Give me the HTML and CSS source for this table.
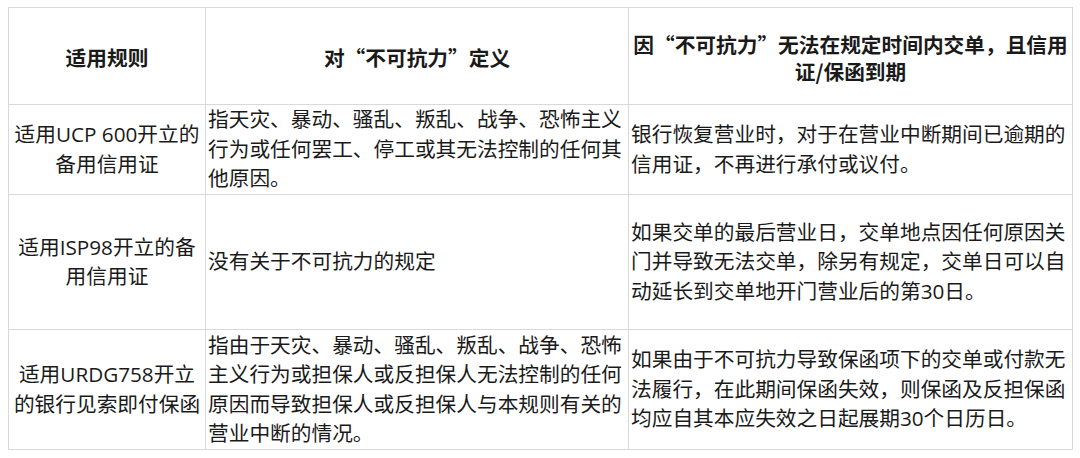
FILE: index.html
```html
<!DOCTYPE html>
<html lang="zh-CN">
<head>
<meta charset="utf-8">
<title>不可抗力规则对比</title>
<link rel="stylesheet" href="styles.css">
</head>
<body>
<table class="rules">
  <colgroup>
    <col class="c1">
    <col class="c2">
    <col class="c3">
  </colgroup>
  <thead>
    <tr class="r-head">
      <th>适用规则</th>
      <th>对“不可抗力”定义</th>
      <th>因“不可抗力”无法在规定时间内交单，且信用证/保函到期</th>
    </tr>
  </thead>
  <tbody>
    <tr class="r1">
      <td class="rule">适用UCP 600开立的备用信用证</td>
      <td>指天灾、暴动、骚乱、叛乱、战争、恐怖主义行为或任何罢工、停工或其无法控制的任何其他原因。</td>
      <td>银行恢复营业时，对于在营业中断期间已逾期的信用证，不再进行承付或议付。</td>
    </tr>
    <tr class="r2">
      <td class="rule">适用ISP98开立的备用信用证</td>
      <td>没有关于不可抗力的规定</td>
      <td>如果交单的最后营业日，交单地点因任何原因关门并导致无法交单，除另有规定，交单日可以自动延长到交单地开门营业后的第30日。</td>
    </tr>
    <tr class="r3">
      <td class="rule">适用URDG758开立的银行见索即付保函</td>
      <td>指由于天灾、暴动、骚乱、叛乱、战争、恐怖主义行为或担保人或反担保人无法控制的任何原因而导致担保人或反担保人与本规则有关的营业中断的情况。</td>
      <td>如果由于不可抗力导致保函项下的交单或付款无法履行，在此期间保函失效，则保函及反担保函均应自其本应失效之日起展期30个日历日。</td>
    </tr>
  </tbody>
</table>
</body>
</html>
```

FILE: styles.css
```css
html, body {
  margin: 0;
  padding: 0;
  background: #ffffff;
}

body {
  padding: 7px 8px 0 8px;
  font-family: "Noto Sans CJK SC", "Noto Sans", sans-serif;
  color: #1a1a1a;
}

.rules {
  border-collapse: collapse;
  table-layout: fixed;
  width: 1064px;
  font-size: 20.7px;
}

.c1 { width: 197px; }
.c2 { width: 423px; }
.c3 { width: 444px; }

.rules th,
.rules td {
  border: 1px solid #d9d9d9;
  padding: 0 2px;
  vertical-align: middle;
  text-align: left;
  line-height: 29.5px;
}

.rules td {
  font-family: "Open Sans", "Noto Sans CJK SC", sans-serif;
}

.rules th {
  font-family: "Noto Sans CJK SC", "Noto Sans", sans-serif;
  font-weight: bold;
  text-align: center;
  line-height: 27px;
  padding-top: 3px;
}

.rules td.rule {
  text-align: center;
}

.r-head { height: 97px; }
.r1 { height: 90px; }
.r2 { height: 135px; }
.r3 { height: 120px; }
```
